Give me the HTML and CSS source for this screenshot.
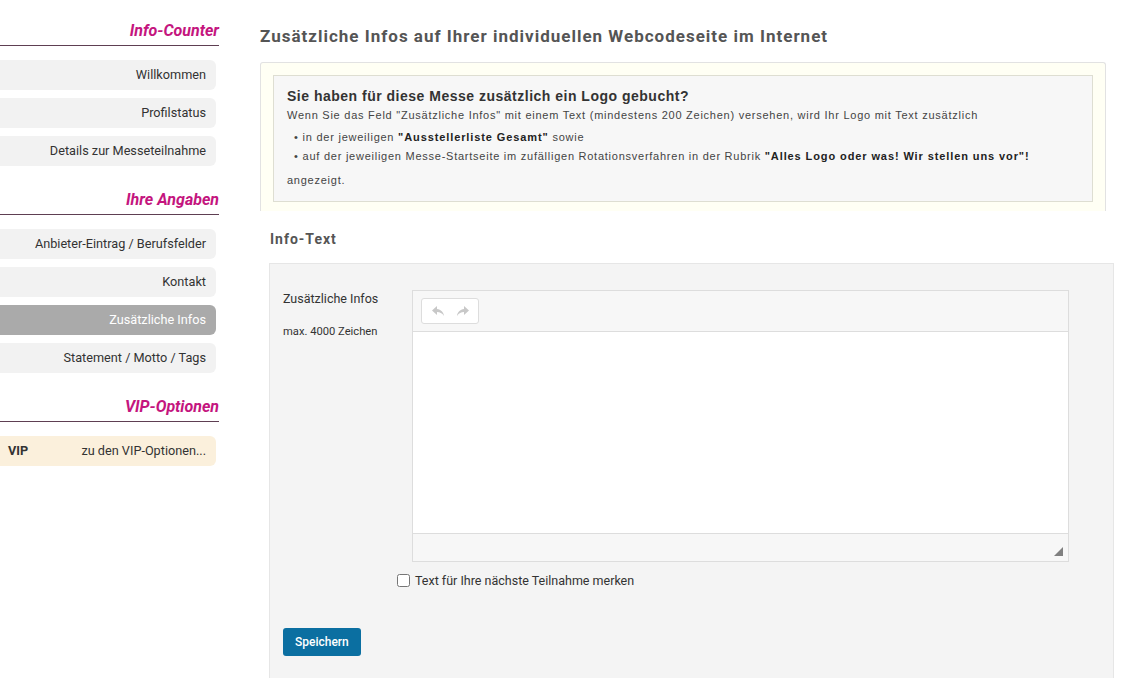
FILE: index.html
```html
<!DOCTYPE html>
<html lang="de">

<head>
    <meta charset="UTF-8">
    <meta name="viewport" content="width=device-width, initial-scale=1.0">
    <title>Zusätzliche Infos</title>
    <link rel="stylesheet" href="styles.css">
</head>

<body>
    <div class="page">
        <aside class="sidebar">
            <h3 class="side-title">Info-Counter</h3>
            <ul class="side-nav">
                <li><a href="#">Willkommen</a></li>
                <li><a href="#">Profilstatus</a></li>
                <li><a href="#">Details zur Messeteilnahme</a></li>
            </ul>

            <h3 class="side-title">Ihre Angaben</h3>
            <ul class="side-nav">
                <li><a href="#">Anbieter-Eintrag / Berufsfelder</a></li>
                <li><a href="#">Kontakt</a></li>
                <li><a href="#" class="active">Zusätzliche Infos</a></li>
                <li><a href="#">Statement / Motto / Tags</a></li>
            </ul>

            <h3 class="side-title">VIP-Optionen</h3>
            <ul class="side-nav">
                <li><a href="#" class="vip"><b>VIP</b><span>zu den VIP-Optionen...</span></a></li>
            </ul>
        </aside>

        <main class="content">
            <h2 class="page-title">Zusätzliche Infos auf Ihrer individuellen Webcodeseite im Internet</h2>

            <div class="hint-box">
                <div class="hint-inner">
                    <h4>Sie haben für diese Messe zusätzlich ein Logo gebucht?</h4>
                    <p>Wenn Sie das Feld "Zusätzliche Infos" mit einem Text (mindestens 200 Zeichen) versehen, wird Ihr Logo mit Text zusätzlich</p>
                    <ul>
                        <li>in der jeweiligen <b>"Ausstellerliste Gesamt"</b> sowie</li>
                        <li>auf der jeweiligen Messe-Startseite im zufälligen Rotationsverfahren in der Rubrik <b>"Alles Logo oder was! Wir stellen uns vor"!</b></li>
                    </ul>
                    <p class="last">angezeigt.</p>
                </div>
            </div>

            <h3 class="section-title">Info-Text</h3>

            <form class="panel">
                <div class="field">
                    <div class="field-label">
                        <label for="infos">Zusätzliche Infos</label>
                        <small>max. 4000 Zeichen</small>
                    </div>
                    <div class="editor">
                        <div class="toolbar">
                            <div class="btn-group">
                                <button type="button" title="Rückgängig">
                                    <svg width="14" height="12" viewBox="0 0 14 12"><path d="M6 1 L1 5.5 L6 10 V7 C9 7 11 8 13 11 C12.5 7 10 4.5 6 4 Z" fill="#c8c8c8"/></svg>
                                </button>
                                <button type="button" title="Wiederholen">
                                    <svg width="14" height="12" viewBox="0 0 14 12"><path d="M8 1 L13 5.5 L8 10 V7 C5 7 3 8 1 11 C1.5 7 4 4.5 8 4 Z" fill="#c8c8c8"/></svg>
                                </button>
                            </div>
                        </div>
                        <textarea id="infos" name="infos"></textarea>
                        <div class="statusbar"><span class="grip"></span></div>
                    </div>
                </div>

                <label class="remember">
                    <input type="checkbox" name="remember">
                    Text für Ihre nächste Teilnahme merken
                </label>

                <button type="submit" class="save">Speichern</button>
            </form>
        </main>
    </div>
</body>

</html>
```

FILE: styles.css
```css
body {
    margin: 0;
    font-family: Roboto, "Liberation Sans", Arial, sans-serif;
    color: #333;
    background: #fff;
}

.page {
    display: flex;
    align-items: flex-start;
}

/* Sidebar */

.sidebar {
    width: 219px;
    flex-shrink: 0;
    padding-top: 21px;
}

.side-title {
    margin: 0 0 14px;
    padding: 0 0 5px;
    text-align: right;
    font-size: 16px;
    font-weight: bold;
    font-style: italic;
    color: #c4157e;
    border-bottom: 1px solid #5e3f52;
    line-height: 19px;
}

.side-nav {
    list-style: none;
    margin: 0 3px 24px 0;
    padding: 0;
    display: flex;
    flex-direction: column;
    gap: 8px;
}

.side-nav a {
    display: block;
    height: 30px;
    line-height: 30px;
    padding: 0 10px;
    text-align: right;
    font-size: 12.7px;
    color: #333;
    text-decoration: none;
    background: #f2f2f2;
    border-radius: 0 6px 6px 0;
}

.side-nav a.active {
    background: #aaa;
    color: #fff;
}

.side-nav a.vip {
    display: flex;
    justify-content: space-between;
    padding-left: 8px;
    background: #fbf0dc;
}

.side-nav a.vip b {
    font-weight: bold;
    color: #333;
}

/* Content */

.content {
    flex: 1;
    padding: 0 18px 0 41px;
}

.page-title {
    margin: 26px 0 16px;
    font-size: 17px;
    font-weight: bold;
    letter-spacing: 1px;
    color: #555;
    line-height: 20px;
}

.hint-box {
    background: #fffff4;
    border: 1px solid #e2e2e2;
    border-bottom: none;
    border-radius: 3px 3px 0 0;
    padding: 12px 12px 9px;
    margin-right: 8px;
}

.hint-inner {
    background: #f7f7f7;
    border: 1px solid #deded2;
    padding: 12px 13px 14px;
    font-family: "Liberation Sans", Arial, sans-serif;
    font-size: 11px;
    letter-spacing: 0.75px;
    color: #444;
}

.hint-inner h4 {
    margin: 0 0 4px;
    font-size: 14px;
    letter-spacing: 0.5px;
    color: #333;
    line-height: 16px;
}

.hint-inner p {
    margin: 0;
    line-height: 14px;
}

.hint-inner ul {
    list-style: none;
    margin: 8px 0 10px;
    padding-left: 7px;
    display: flex;
    flex-direction: column;
    gap: 5px;
}

.hint-inner li {
    line-height: 14px;
}

.hint-inner li::before {
    content: "•";
    margin-right: 4px;
}

.hint-inner b {
    color: #222;
    letter-spacing: 0.9px;
}

.section-title {
    margin: 20px 0 16px 10px;
    font-size: 14px;
    font-weight: bold;
    letter-spacing: 1px;
    color: #555;
    line-height: 16px;
}

/* Form panel */

.panel {
    margin-left: 9px;
    background: #f4f4f4;
    border: 1px solid #e6e6e6;
    border-bottom: none;
    padding: 26px 0 23px 13px;
}

.field {
    display: flex;
}

.field-label {
    width: 129px;
    padding-top: 2px;
    font-size: 12.5px;
    color: #333;
}

.field-label label {
    display: block;
    line-height: 14px;
}

.field-label small {
    display: block;
    margin-top: 19px;
    font-size: 11.2px;
    line-height: 14px;
}

.editor {
    width: 655px;
    border: 1px solid #ddd;
    background: #fff;
}

.toolbar {
    height: 41px;
    background: #f7f7f7;
    border-bottom: 1px solid #ddd;
    padding: 7px 8px 0;
    box-sizing: border-box;
}

.btn-group {
    display: inline-flex;
    border: 1px solid #ddd;
    border-radius: 3px;
    background: #fff;
    height: 26px;
    box-sizing: border-box;
    padding: 0 3px;
}

.btn-group button {
    border: none;
    background: none;
    width: 25px;
    padding: 0;
    display: flex;
    align-items: center;
    justify-content: center;
}

.editor textarea {
    display: block;
    width: 100%;
    height: 201px;
    border: none;
    resize: none;
    box-sizing: border-box;
    margin: 0;
    outline: none;
}

.statusbar {
    height: 27px;
    background: #f7f7f7;
    border-top: 1px solid #ddd;
    position: relative;
}

.grip {
    position: absolute;
    right: 5px;
    bottom: 5px;
    width: 0;
    height: 0;
    border-left: 9px solid transparent;
    border-bottom: 9px solid #808080;
}

.remember {
    display: flex;
    align-items: center;
    margin: 11px 0 0 114px;
    font-size: 12.5px;
    color: #333;
}

.remember input {
    width: 13px;
    height: 13px;
    margin: 0 5px 0 0;
}

.save {
    display: block;
    margin-top: 40px;
    padding: 0 12px;
    height: 28px;
    border: none;
    border-radius: 3px;
    background: #0b6fa1;
    color: #fff;
    font-family: Roboto, "Liberation Sans", Arial, sans-serif;
    font-size: 12px;
    font-weight: 500;
    cursor: pointer;
}
```
